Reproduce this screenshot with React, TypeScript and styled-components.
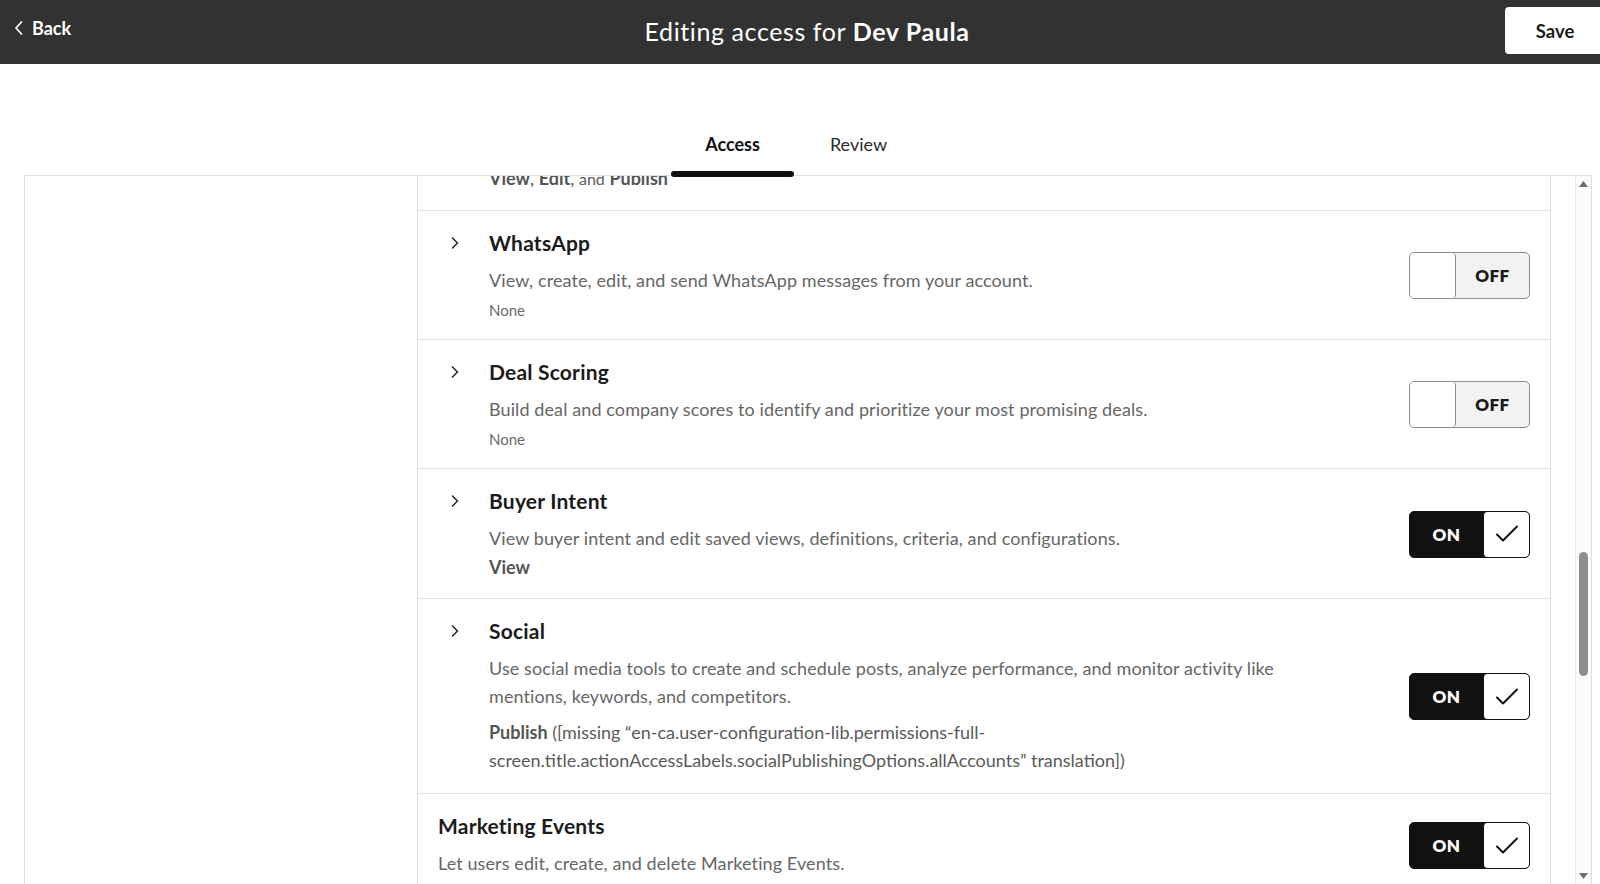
import type { ReactNode } from "react";
import styled, { createGlobalStyle } from "styled-components";

const GlobalStyle = createGlobalStyle`
  html, body {
    margin: 0;
    padding: 0;
    background: #ffffff;
  }
  body {
    font-family: Lato, "Liberation Sans", Arial, sans-serif;
    color: #1f1f1f;
    overflow: hidden;
  }
  * {
    box-sizing: border-box;
  }
`;

const Page = styled.div`
  height: 884px;
  display: flex;
  flex-direction: column;
  overflow: hidden;
`;

/* ---------- top bar ---------- */

const Header = styled.header`
  flex: none;
  height: 64px;
  background: #323232;
  color: #ffffff;
  display: grid;
  grid-template-columns: 1fr auto 1fr;
  align-items: start;
  padding-left: 14px;
  overflow: hidden;
`;

const BackButton = styled.button`
  justify-self: start;
  margin-top: 16px;
  display: flex;
  align-items: center;
  gap: 8px;
  padding: 0;
  border: 0;
  background: none;
  color: #ffffff;
  font: 700 18px/24px Lato, sans-serif;
  cursor: pointer;
`;

const Title = styled.h1`
  margin: 15px 0 0;
  font: 400 25px/32px Lato, sans-serif;
  letter-spacing: 0.6px;
  color: #ffffff;

  strong {
    font-weight: 700;
  }
`;

const SaveButton = styled.button`
  justify-self: end;
  margin: 7px -5px 0 0;
  width: 100px;
  height: 47px;
  border: 0;
  border-radius: 4px;
  background: #ffffff;
  color: #1a1a1a;
  font: 700 18.5px Lato, sans-serif;
  cursor: pointer;
`;

/* ---------- tabs ---------- */

const TabBar = styled.nav`
  flex: none;
  position: relative;
  z-index: 1;
  display: flex;
  justify-content: center;
  gap: 3px;
  margin: 56px 0 -2px;
  padding-right: 9px;
`;

const Tab = styled.div<{ $active?: boolean }>`
  position: relative;
  width: 123px;
  height: 57px;
  padding-top: 12px;
  text-align: center;
  font: ${(p) => (p.$active ? 700 : 400)} 18px/24px Lato, sans-serif;
  color: ${(p) => (p.$active ? "#111111" : "#2b2b2b")};
  cursor: pointer;

  &::after {
    content: "";
    display: ${(p) => (p.$active ? "block" : "none")};
    position: absolute;
    left: 0;
    right: 0;
    bottom: 0;
    height: 6px;
    border-radius: 3px;
    background: #111111;
  }
`;

/* ---------- panel ---------- */

const Panel = styled.section`
  flex: 1;
  min-height: 0;
  margin: 0 8px 0 24px;
  border: 1px solid #dedede;
  border-bottom: 0;
  display: grid;
  grid-template-columns: 392px 1fr 16px;
  overflow: hidden;
`;

const SideColumn = styled.aside`
  background: #ffffff;
`;

const List = styled.div`
  margin-right: 24px;
  border-left: 1px solid #dedede;
  border-right: 1px solid #dedede;
  overflow: hidden;
`;

const Row = styled.div<{ $clipped?: boolean }>`
  display: flex;
  align-items: center;
  gap: 24px;
  padding: ${(p) => (p.$clipped ? "0 20px 19px" : "20px 20px 19px")};
  margin-top: ${(p) => (p.$clipped ? "-13px" : "0")};
  border-bottom: 1px solid #e3e3e3;
`;

const RowBody = styled.div`
  flex: 1;
  display: flex;
  align-items: flex-start;
`;

const ChevronCell = styled.div`
  flex: none;
  width: 51px;
  height: 24px;
  padding-left: 11px;
  display: flex;
  align-items: center;
  color: #222222;
`;

const RowText = styled.div`
  max-width: 800px;
`;

const RowTitle = styled.div`
  font: 700 21px/24px Lato, sans-serif;
  letter-spacing: 0.2px;
  color: #1b1b1b;
`;

const RowDesc = styled.div`
  margin-top: 11px;
  font: 400 18px/28px Lato, sans-serif;
  letter-spacing: 0.1px;
  color: #666666;
`;

type NoteKind = "none" | "level" | "long";

const AccessNote = styled.div<{ $kind: NoteKind }>`
  margin-top: ${(p) => (p.$kind === "none" ? "6px" : p.$kind === "level" ? "3px" : "8px")};
  font-size: ${(p) => (p.$kind === "none" ? "15px" : "18px")};
  line-height: ${(p) => (p.$kind === "none" ? "20px" : p.$kind === "level" ? "24px" : "28px")};
  color: ${(p) => (p.$kind === "none" ? "#6b6b6b" : "#5a5a5a")};

  b {
    font-weight: 700;
    color: #555555;
  }

  small {
    font-size: 16px;
  }
`;

/* ---------- toggle ---------- */

const Switch = styled.div<{ $on: boolean }>`
  flex: none;
  width: 121px;
  height: 47px;
  display: flex;
  flex-direction: ${(p) => (p.$on ? "row" : "row-reverse")};
  border: 1px solid ${(p) => (p.$on ? "#111111" : "#8c8c8c")};
  border-radius: 5px;
  background: ${(p) => (p.$on ? "#111111" : "#f2f2f2")};
  overflow: hidden;
  cursor: pointer;
`;

const SwitchLabel = styled.span<{ $on: boolean }>`
  flex: 1;
  display: flex;
  align-items: center;
  justify-content: center;
  font: 800 17px Lato, sans-serif;
  letter-spacing: 0.4px;
  color: ${(p) => (p.$on ? "#ffffff" : "#1a1a1a")};
`;

const Knob = styled.span<{ $on: boolean }>`
  flex: none;
  width: 46px;
  display: flex;
  align-items: center;
  justify-content: center;
  background: #ffffff;
  border-radius: 4px;
  border-${(p) => (p.$on ? "left" : "right")}: 1px solid ${(p) => (p.$on ? "#111111" : "#8c8c8c")};
`;

/* ---------- scrollbar ---------- */

const ScrollTrack = styled.div`
  display: flex;
  flex-direction: column;
  align-items: center;
  border-left: 1px solid #ececec;
  background: #fbfbfb;
`;

const ScrollArrow = styled.div`
  flex: none;
  height: 16px;
  display: flex;
  align-items: center;
  justify-content: center;
  color: #6e6e6e;
`;

const ScrollThumb = styled.div`
  flex: none;
  width: 9px;
  height: 124px;
  margin-top: 360px;
  border-radius: 5px;
  background: #8e8e8e;
`;

const ScrollSpacer = styled.div`
  flex: 1;
`;

/* ---------- icons ---------- */

const ChevronLeft = () => (
  <svg width="10" height="16" viewBox="0 0 10 16" fill="none">
    <path d="M7.5 2 L2 8 L7.5 14" stroke="currentColor" strokeWidth="1.8" strokeLinecap="round" strokeLinejoin="round" />
  </svg>
);

const ChevronRight = () => (
  <svg width="12" height="16" viewBox="0 0 12 16" fill="none">
    <path d="M3.5 3 L8.5 8 L3.5 13" stroke="currentColor" strokeWidth="1.5" strokeLinecap="round" strokeLinejoin="round" />
  </svg>
);

const Check = () => (
  <svg width="26" height="22" viewBox="0 0 26 22" fill="none">
    <path d="M3 11.5 L9 17.5 L23 3.5" stroke="#111111" strokeWidth="2" strokeLinecap="round" strokeLinejoin="round" />
  </svg>
);

const Triangle = ({ down }: { down?: boolean }) => (
  <svg width="9" height="6" viewBox="0 0 9 6">
    <path d={down ? "M0 0 H9 L4.5 6 Z" : "M0 6 H9 L4.5 0 Z"} fill="currentColor" />
  </svg>
);

/* ---------- data ---------- */

type Permission = {
  title: string;
  description: string;
  note?: ReactNode;
  noteKind?: NoteKind;
  on: boolean;
  expandable: boolean;
};

const permissions: Permission[] = [
  {
    title: "WhatsApp",
    description: "View, create, edit, and send WhatsApp messages from your account.",
    note: "None",
    noteKind: "none",
    on: false,
    expandable: true,
  },
  {
    title: "Deal Scoring",
    description: "Build deal and company scores to identify and prioritize your most promising deals.",
    note: "None",
    noteKind: "none",
    on: false,
    expandable: true,
  },
  {
    title: "Buyer Intent",
    description: "View buyer intent and edit saved views, definitions, criteria, and configurations.",
    note: <b>View</b>,
    noteKind: "level",
    on: true,
    expandable: true,
  },
  {
    title: "Social",
    description:
      "Use social media tools to create and schedule posts, analyze performance, and monitor activity like mentions, keywords, and competitors.",
    note: (
      <>
        <b>Publish</b> ([missing “en-ca.user-configuration-lib.permissions-full-screen.title.actionAccessLabels.socialPublishingOptions.allAccounts” translation])
      </>
    ),
    noteKind: "long",
    on: true,
    expandable: true,
  },
  {
    title: "Marketing Events",
    description: "Let users edit, create, and delete Marketing Events.",
    on: true,
    expandable: false,
  },
];

const Toggle = ({ on }: { on: boolean }) => (
  <Switch $on={on}>
    <SwitchLabel $on={on}>{on ? "ON" : "OFF"}</SwitchLabel>
    <Knob $on={on}>{on && <Check />}</Knob>
  </Switch>
);

export default function App() {
  return (
    <Page>
      <GlobalStyle />
      <Header>
        <BackButton>
          <ChevronLeft />
          Back
        </BackButton>
        <Title>
          Editing access for <strong>Dev Paula</strong>
        </Title>
        <SaveButton>Save</SaveButton>
      </Header>

      <TabBar>
        <Tab $active>Access</Tab>
        <Tab>Review</Tab>
      </TabBar>

      <Panel>
        <SideColumn />
        <List>
          {/* row above, scrolled mostly out of view */}
          <Row $clipped>
            <RowBody>
              <ChevronCell />
              <AccessNote $kind="level">
                <b>View</b>, <b>Edit</b>, <small>and</small> <b>Publish</b>
              </AccessNote>
            </RowBody>
          </Row>
          {permissions.map((p) => (
            <Row key={p.title}>
              <RowBody>
                {p.expandable && (
                  <ChevronCell>
                    <ChevronRight />
                  </ChevronCell>
                )}
                <RowText>
                  <RowTitle>{p.title}</RowTitle>
                  <RowDesc>{p.description}</RowDesc>
                  {p.note && <AccessNote $kind={p.noteKind ?? "none"}>{p.note}</AccessNote>}
                </RowText>
              </RowBody>
              <Toggle on={p.on} />
            </Row>
          ))}
        </List>
        <ScrollTrack>
          <ScrollArrow>
            <Triangle />
          </ScrollArrow>
          <ScrollThumb />
          <ScrollSpacer />
          <ScrollArrow>
            <Triangle down />
          </ScrollArrow>
        </ScrollTrack>
      </Panel>
    </Page>
  );
}
